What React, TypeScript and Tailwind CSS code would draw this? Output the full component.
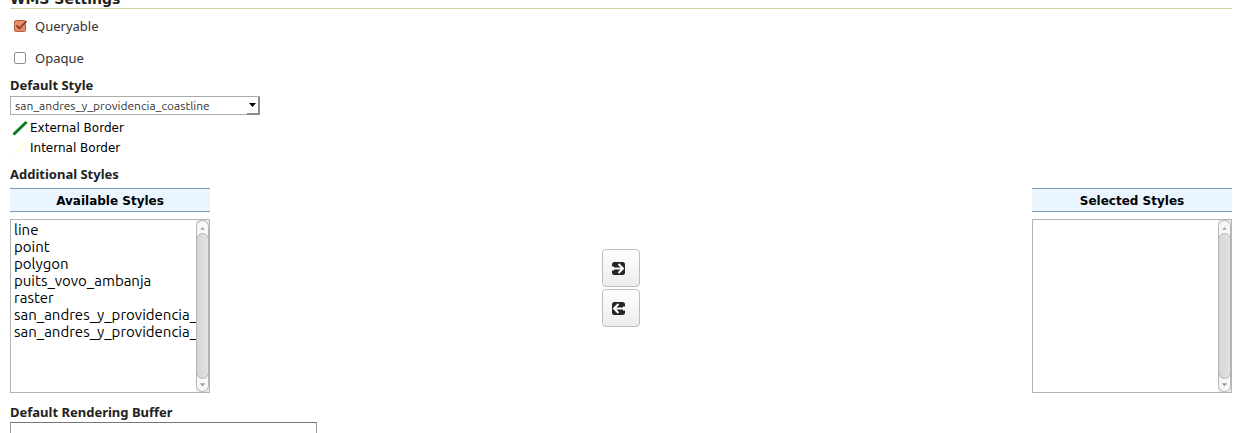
import React from 'react'

const availableStyles = [
  'line',
  'point',
  'polygon',
  'puits_vovo_ambanja',
  'raster',
  'san_andres_y_providencia_coastline',
  'san_andres_y_providencia_highway',
]

const legend = [
  { label: 'External Border', color: '#0b7a1b', width: 3 },
  { label: 'Internal Border', color: '#ffffcc', width: 1.5 },
]

const ScrollBar: React.FC = () => (
  <div className="w-[13px] shrink-0 flex flex-col bg-[#e9e9e8]" aria-hidden="true">
    <div className="grow flex flex-col rounded-full border border-[#b5b5b5] bg-[#f8f8f8]">
      <svg className="h-3 w-full" viewBox="0 0 12 12">
        <path d="M3.5 9 6 6l2.500 3z" fill="#a5a5a5" />
      </svg>
      <div className="grow -mx-px rounded-full border border-[#b4b4b4] bg-linear-to-r from-[#d6d6d5] to-[#e2e2e0]"></div>
      <svg className="h-3 w-full" viewBox="0 0 12 12">
        <path d="M3 4h6L6 7.500z" fill="#9a9a9a" />
      </svg>
    </div>
  </div>
)

const StyleList: React.FC<{ id: string; title: string; items: string[] }> = ({
  id,
  title,
  items,
}) => (
  <div className="w-[200px]">
    <label
      htmlFor={id}
      className="block h-6 border-y border-[#7d9bb5] bg-[#ebf5ff] text-center font-['DejaVu_Sans',sans-serif] text-xs leading-6 font-bold text-black"
    >
      {title}
    </label>
    <div className="mt-[7px] h-[174px] flex border border-[#b4b4b4] bg-white">
      <select
        id={id}
        multiple
        className="min-w-0 grow overflow-hidden pt-px font-[Ubuntu,'Noto_Sans',sans-serif] text-[15px] leading-4 text-black outline-none"
      >
        {items.map((item) => (
          <option key={item} className="h-[17px] min-h-0 px-[3px] py-0 leading-4">
            {item}
          </option>
        ))}
      </select>
      <ScrollBar />
    </div>
  </div>
)

const MoveButton: React.FC<{ label: string; path: string }> = ({ label, path }) => (
  <button
    type="button"
    aria-label={label}
    className="size-[38px] flex items-center justify-center rounded border border-[#bdbdbd] bg-linear-to-b from-white to-[#ececea] pt-px pr-[5px]"
  >
    <svg className="size-[13px]" viewBox="0 0 13 13" fill="none">
      <rect width="13" height="13" rx="2.500" fill="#242424" />
      <path d={path} stroke="#fff" strokeWidth="2" />
    </svg>
  </button>
)

const heading =
  "block font-['Noto_Sans','Open_Sans',sans-serif] text-[13px] leading-4 font-bold text-[#222]"

const App: React.FC = () => {
  return (
    <form className="w-full pl-[10px] pr-3 font-['Noto_Sans',sans-serif] text-[#333]">
      <div className="h-[9px] flex items-end overflow-hidden border-b border-[#cfd3a4] pb-px">
        <h3 className="font-['DejaVu_Sans',sans-serif] text-sm leading-4 font-bold text-[#222]">
          WMS Settings
        </h3>
      </div>

      <div className="mt-[7px] flex flex-col gap-3 px-1 text-[13px] leading-5">
        <label className="flex items-center gap-[9px]">
          <span className="relative flex">
            <input
              type="checkbox"
              defaultChecked
              className="peer size-3 appearance-none rounded-xs border border-[#b0664a] bg-[#f08a66]"
            />
            <svg
              className="pointer-events-none absolute inset-0 size-3 overflow-visible opacity-0 peer-checked:opacity-100"
              viewBox="0 0 12 12"
            >
              <path d="M2.500 5.500 5.500 8.500 12.500 1" fill="none" stroke="#7a4230" strokeWidth="1.800" />
            </svg>
          </span>
          Queryable
        </label>
        <label className="flex items-center gap-[9px]">
          <input
            type="checkbox"
            className="size-3 appearance-none rounded-xs border border-[#8f8f8f] bg-white checked:bg-[#f08a66]"
          />
          Opaque
        </label>
      </div>

      <label htmlFor="default-style" className={`mt-[9px] ${heading}`}>
        Default Style
      </label>
      <div className="relative mt-[3px] w-[250px]">
        <select
          id="default-style"
          className="block h-[19px] w-full appearance-none border border-[#aaa] bg-white px-1 font-[Ubuntu,'Noto_Sans',sans-serif] text-xs leading-4 text-[#333]"
        >
          <option>san_andres_y_providencia_coastline</option>
        </select>
        <span className="pointer-events-none absolute top-px right-0 flex h-[18px] w-[13px] items-center justify-center border-r-2 border-b-2 border-[#8c8c8c] bg-white">
          <svg className="h-1 w-[7px]" viewBox="0 0 7 4">
            <path d="M0 0h7L3.500 4z" fill="#000" />
          </svg>
        </span>
      </div>

      <ul className="mt-[3px] font-['DejaVu_Sans',sans-serif] text-xs text-black">
        {legend.map((item) => (
          <li key={item.label} className="h-5 flex items-center">
            <svg className="size-5" viewBox="0 0 20 20">
              <path d="M3.500 16.500 16.500 4" stroke={item.color} strokeWidth={item.width} />
            </svg>
            {item.label}
          </li>
        ))}
      </ul>

      <div className={`mt-2 ${heading}`}>Additional Styles</div>
      <div className="mt-[6px] flex justify-between">
        <StyleList id="available" title="Available Styles" items={availableStyles} />
        <div className="flex flex-col gap-[2px] pt-[61px]">
          <MoveButton label="Add style" path="M2 6.500h8.500M6.500 2l4.500 4.500L6.500 11M0 5.500h2M0 7.500h2" />
          <MoveButton label="Remove style" path="M11 6.500H2.500M6.500 2 2 6.500 6.500 11M13 5.500h-2M13 7.500h-2" />
        </div>
        <StyleList id="selected" title="Selected Styles" items={[]} />
      </div>

      <label htmlFor="buffer" className={`mt-[11px] ${heading}`}>
        Default Rendering Buffer
      </label>
      <input
        id="buffer"
        type="text"
        className="mt-[2px] block h-6 w-[307px] border border-[#999] border-t-[#777] bg-white px-1 text-xs"
      />
    </form>
  )
}

export default App
